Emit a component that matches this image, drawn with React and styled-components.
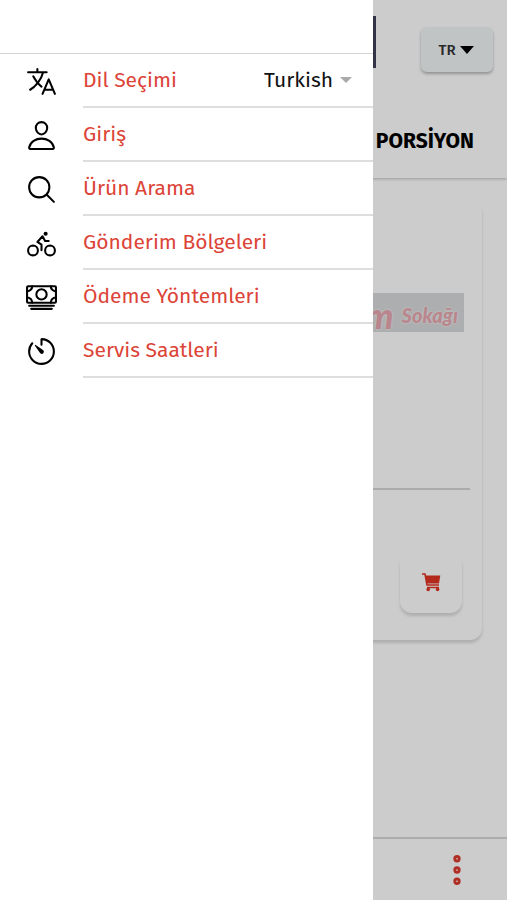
import React from "react";
import styled, { createGlobalStyle } from "styled-components";
import {
  IoLanguageOutline,
  IoPersonOutline,
  IoSearchOutline,
  IoBicycleOutline,
  IoCashOutline,
  IoTimerOutline,
  IoEllipsisVerticalOutline,
} from "react-icons/io5";

const GlobalStyle = createGlobalStyle`
  * { box-sizing: border-box; }
  body {
    margin: 0;
    background: #fff;
    color: #000;
    font-family: "Fira Sans", "Noto Sans", sans-serif;
  }
  button, select { font: inherit; color: inherit; }
`;

const Page = styled.div`
  min-height: 100vh;
  display: flex;
  flex-direction: column;
`;

const Header = styled.header`
  height: 178px;
  display: flex;
  flex-direction: column;
  box-shadow: 0 1px 3px rgba(0, 0, 0, 0.25);
`;

const TopBar = styled.div`
  display: flex;
  justify-content: space-between;
  padding: 16px 14px 0 132px;
`;

const BrandBlock = styled.div`
  width: 244px;
  height: 52px;
  background: #40405a;
`;

const LanguageButton = styled.button`
  width: 72px;
  height: 45px;
  margin-top: 11px;
  padding: 0 2px 0 0;
  display: flex;
  align-items: center;
  justify-content: center;
  gap: 4px;
  border: 0;
  border-radius: 6px;
  background: #f1f5f7;
  color: #333;
  font-size: 15px;
  font-weight: 500;
  box-shadow: 0 2px 3px rgba(0, 0, 0, 0.28);
`;

const Caret = styled.svg`
  width: ${(p) => p.$size}px;
  height: ${(p) => p.$height}px;
  fill: ${(p) => p.$color};
  flex: none;
  pointer-events: none;
`;

const Categories = styled.nav`
  display: flex;
  justify-content: flex-end;
  padding: 55px 33px 0 0;
`;

const CategoryLink = styled.a`
  color: #000;
  font-size: 21px;
  line-height: 28px;
  font-weight: 700;
  text-decoration: none;
`;

const Content = styled.main`
  flex: 1;
  padding: 22px 25px 0;
`;

const ProductCard = styled.article`
  height: 440px;
  display: flex;
  flex-direction: column;
  align-items: flex-end;
  border-radius: 12px;
  box-shadow: 0 3px 3px rgba(0, 0, 0, 0.14);
`;

const ProductLogo = styled.div`
  width: 320px;
  height: 39px;
  margin: 93px 18px 0 0;
  padding: 4px 6px 0 0;
  display: flex;
  align-items: center;
  justify-content: flex-end;
  gap: 8px;
  background: #d8dadb;
  color: #e6a8b0;
  font-family: Lato, sans-serif;
  font-style: italic;
  font-weight: 900;
  text-shadow: 0 0 2px #f4f4f4, 0 0 2px #f4f4f4;
`;

const LogoWord = styled.span`
  font-size: ${(p) => p.$size}px;
  line-height: 32px;
`;

const Divider = styled.hr`
  width: calc(100% - 24px);
  height: 2px;
  margin: 156px 12px 0;
  border: 0;
  background: #d6d6d6;
`;

const CartButton = styled.button`
  width: 62px;
  height: 60px;
  margin: 63px 20px 0 0;
  padding: 0;
  display: grid;
  place-items: center;
  border: 0;
  border-radius: 12px;
  background: #fff;
  color: #e03424;
  box-shadow: 0 3px 3px rgba(0, 0, 0, 0.14);
`;

const CartSvg = styled.svg`
  width: 20px;
  height: 20px;
  margin-bottom: 3px;
`;

const Footer = styled.footer`
  height: 63px;
  display: flex;
  justify-content: flex-end;
  align-items: center;
  padding-right: 32px;
  border-top: 2px solid #d8d8d8;
`;

const MoreButton = styled.button`
  display: grid;
  padding: 0;
  border: 0;
  background: none;
  color: #dc3a2c;
  font-size: 36px;

  circle {
    stroke-width: 40px;
  }
`;

const Backdrop = styled.div`
  position: fixed;
  inset: 0;
  background: rgba(0, 0, 0, 0.2);
`;

const Drawer = styled.aside`
  position: fixed;
  inset: 0 auto 0 0;
  width: 373px;
  max-width: 85%;
  padding-top: 53px;
  background: #fff;
`;

const Menu = styled.ul`
  margin: 0;
  padding: 0;
  list-style: none;
  border-top: 1px solid #d4d4d4;
`;

const MenuItem = styled.li`
  height: 54px;
  display: flex;
  padding-left: 25px;
`;

const IconSlot = styled.span`
  width: 58px;
  display: flex;
  align-items: center;
  font-size: 33px;
`;

const ItemBody = styled.div`
  flex: 1;
  display: flex;
  align-items: center;
  justify-content: space-between;
  padding-right: 21px;
  border-bottom: 2px solid #dedede;
  font-size: 21px;
  line-height: 28px;
`;

const ItemLink = styled.a`
  color: #dc4438;
  text-decoration: none;
`;

const ItemLabel = styled.label`
  color: #dc4438;
`;

const SelectBox = styled.span`
  display: flex;
  align-items: center;
  gap: 6px;
`;

const Select = styled.select`
  appearance: none;
  padding: 0;
  border: 0;
  background: none;
  color: #111;
  line-height: 28px;
`;

const links = [
  { label: "Giriş", Icon: IoPersonOutline },
  { label: "Ürün Arama", Icon: IoSearchOutline },
  { label: "Gönderim Bölgeleri", Icon: IoBicycleOutline },
  { label: "Ödeme Yöntemleri", Icon: IoCashOutline },
  { label: "Servis Saatleri", Icon: IoTimerOutline },
];

function DownCaret({ size, height, color }) {
  return (
    <Caret
      viewBox="0 0 12 6"
      preserveAspectRatio="none"
      $size={size}
      $height={height}
      $color={color}
      aria-hidden="true"
    >
      <path d="M0 0h12L6 6z" />
    </Caret>
  );
}

function CartIcon() {
  return (
    <CartSvg viewBox="0 0 20 20" fill="none" stroke="currentColor" aria-hidden="true">
      <path d="M1 2h3l2 11h12" strokeWidth="1.6" />
      <path d="M4.2 3.4H19.3L18 11.6H5.6z" fill="currentColor" stroke="none" />
      <path d="M6 15.5h12" strokeWidth="1.5" />
      <circle cx="7.2" cy="17.4" r="1.8" fill="currentColor" stroke="none" />
      <circle cx="16.6" cy="17.4" r="1.8" fill="currentColor" stroke="none" />
    </CartSvg>
  );
}

export default function App() {
  return (
    <>
      <GlobalStyle />
      <Page>
        <Header>
          <TopBar>
            <BrandBlock />
            <LanguageButton type="button">
              TR
              <DownCaret size={14} height={8} color="#000" />
            </LanguageButton>
          </TopBar>
          <Categories>
            <CategoryLink href="#porsiyon">PORSİYON</CategoryLink>
          </Categories>
        </Header>
        <Content>
          <ProductCard>
            <ProductLogo>
              <LogoWord $size={36}>m</LogoWord>
              <LogoWord $size={20}>Sokağı</LogoWord>
            </ProductLogo>
            <Divider />
            <CartButton type="button" aria-label="Sepete ekle">
              <CartIcon />
            </CartButton>
          </ProductCard>
        </Content>
        <Footer>
          <MoreButton type="button" aria-label="Menü">
            <IoEllipsisVerticalOutline />
          </MoreButton>
        </Footer>
      </Page>
      <Backdrop />
      <Drawer>
        <Menu>
          <MenuItem>
            <IconSlot>
              <IoLanguageOutline />
            </IconSlot>
            <ItemBody>
              <ItemLabel htmlFor="language">Dil Seçimi</ItemLabel>
              <SelectBox>
                <Select id="language" defaultValue="Turkish">
                  <option>Turkish</option>
                </Select>
                <DownCaret size={12} height={6} color="#aaa" />
              </SelectBox>
            </ItemBody>
          </MenuItem>
          {links.map(({ label, Icon }) => (
            <MenuItem key={label}>
              <IconSlot>
                <Icon />
              </IconSlot>
              <ItemBody>
                <ItemLink href="#">{label}</ItemLink>
              </ItemBody>
            </MenuItem>
          ))}
        </Menu>
      </Drawer>
    </>
  );
}
